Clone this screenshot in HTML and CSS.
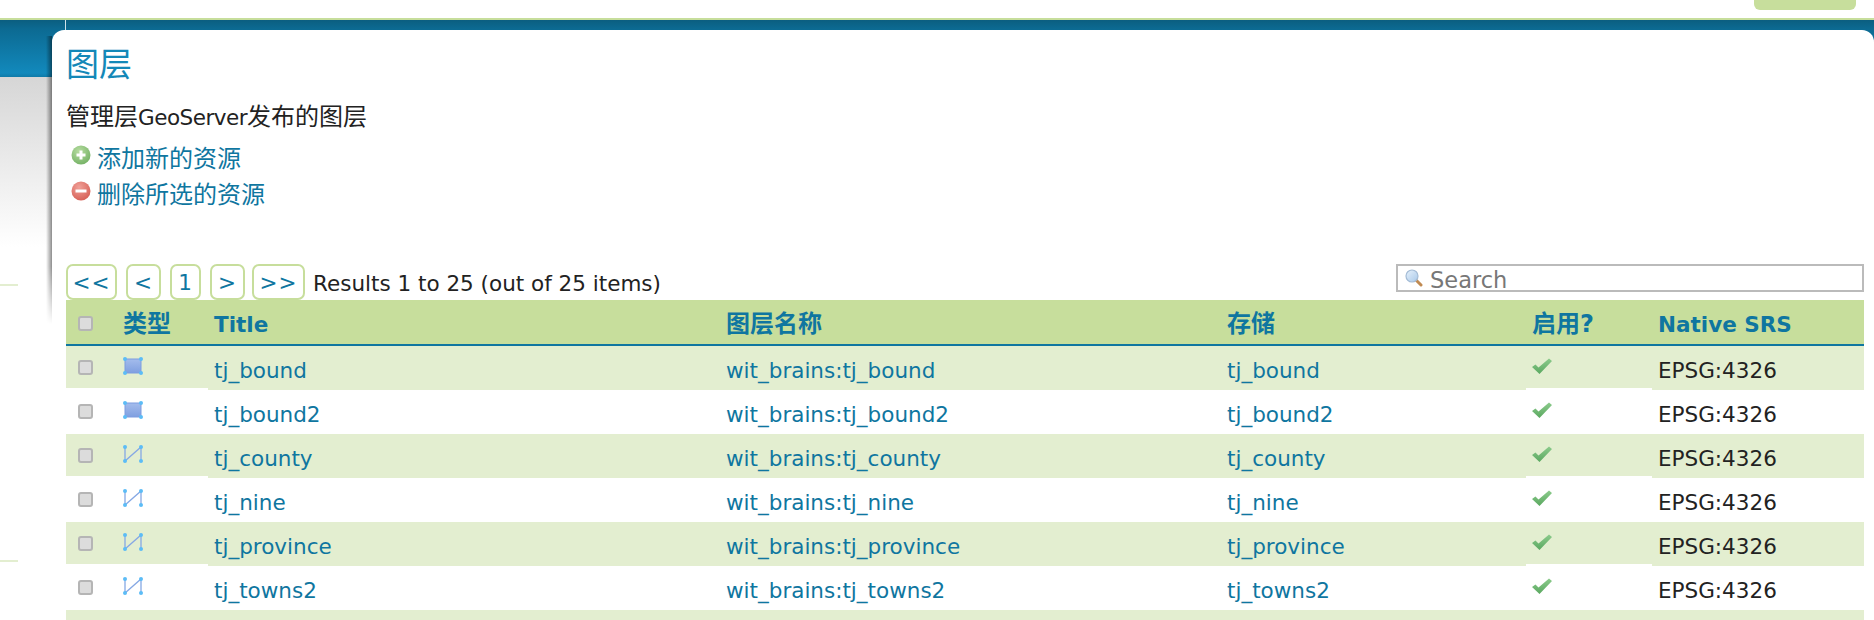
FILE: index.html
```html
<!DOCTYPE html>
<html lang="zh">
<head>
<meta charset="utf-8">
<title>图层</title>
<link rel="stylesheet" href="styles.css">
</head>
<body>
<div class="topbar"><div class="login-tab"></div></div>
<div class="header"></div>
<div class="sidefade"></div>
<div class="tick tick-a"></div>
<div class="tick tick-b"></div>
<main class="page">
  <h1 class="title">图层</h1>
  <p class="desc"><span class="cjk">管理层</span>GeoServer<span class="cjk">发布的图层</span></p>
  <ul class="actions">
    <li><svg class="ico" viewBox="0 0 20 20"><defs><radialGradient id="gp" cx=".4" cy=".3" r=".8"><stop offset="0" stop-color="#b6dca0"/><stop offset="1" stop-color="#6fae60"/></radialGradient></defs><circle cx="10" cy="10" r="9.500" fill="url(#gp)"/><path d="M10 5.500v9M5.500 10h9" stroke="#fff" stroke-width="3"/></svg><a class="cjk" href="#">添加新的资源</a></li>
    <li><svg class="ico" viewBox="0 0 20 20"><defs><radialGradient id="gm" cx=".4" cy=".3" r=".8"><stop offset="0" stop-color="#f0a098"/><stop offset="1" stop-color="#d45a50"/></radialGradient></defs><circle cx="10" cy="10" r="9.500" fill="url(#gm)"/><path d="M4.500 10h11" stroke="#fff" stroke-width="3"/></svg><a class="cjk" href="#">删除所选的资源</a></li>
  </ul>
  <div class="toolbar">
    <nav class="pager">
      <a class="pg pg-first" href="#">&lt;&lt;</a>
      <a class="pg" href="#">&lt;</a>
      <a class="pg pg-num" href="#">1</a>
      <a class="pg" href="#">&gt;</a>
      <a class="pg pg-last" href="#">&gt;&gt;</a>
      <span class="results">Results 1 to 25 (out of 25 items)</span>
    </nav>
    <div class="search">
      <svg class="mag" viewBox="0 0 18 18"><defs><linearGradient id="gl" x1="0" y1="0" x2="1" y2="1"><stop offset="0" stop-color="#e6f1fb"/><stop offset="1" stop-color="#a9c9ea"/></linearGradient></defs><path d="M10.500 10.500l5.500 5.500" stroke="#c08a52" stroke-width="3" stroke-linecap="round"/><circle cx="7" cy="7" r="6" fill="url(#gl)" stroke="#a4bcd6" stroke-width="1.200"/></svg>
      <span class="search-text">Search</span>
    </div>
  </div>
  <div class="table">
    <div class="row head">
      <span class="c c-check"><i class="box"></i></span><span class="c c-type"><span class="cjk">类型</span></span><span class="c c-title">Title</span><span class="c c-name"><span class="cjk">图层名称</span></span><span class="c c-store"><span class="cjk">存储</span></span><span class="c c-on"><span class="cjk">启用?</span></span><span class="c c-srs">Native SRS</span>
    </div>
    <div class="row odd">
      <span class="c c-check"><i class="box"></i></span><span class="c c-type"><svg class="geo" viewBox="0 0 20 18"><use href="#poly"/></svg></span><span class="c c-title"><a href="#">tj_bound</a></span><span class="c c-name"><a href="#">wit_brains:tj_bound</a></span><span class="c c-store"><a href="#">tj_bound</a></span><span class="c c-on"><svg class="chk" viewBox="0 0 20 16"><use href="#check"/></svg></span><span class="c c-srs">EPSG:4326</span>
    </div>
    <div class="row">
      <span class="c c-check"><i class="box"></i></span><span class="c c-type"><svg class="geo" viewBox="0 0 20 18"><use href="#poly"/></svg></span><span class="c c-title"><a href="#">tj_bound2</a></span><span class="c c-name"><a href="#">wit_brains:tj_bound2</a></span><span class="c c-store"><a href="#">tj_bound2</a></span><span class="c c-on"><svg class="chk" viewBox="0 0 20 16"><use href="#check"/></svg></span><span class="c c-srs">EPSG:4326</span>
    </div>
    <div class="row odd">
      <span class="c c-check"><i class="box"></i></span><span class="c c-type"><svg class="geo" viewBox="0 0 20 18"><use href="#line"/></svg></span><span class="c c-title"><a href="#">tj_county</a></span><span class="c c-name"><a href="#">wit_brains:tj_county</a></span><span class="c c-store"><a href="#">tj_county</a></span><span class="c c-on"><svg class="chk" viewBox="0 0 20 16"><use href="#check"/></svg></span><span class="c c-srs">EPSG:4326</span>
    </div>
    <div class="row">
      <span class="c c-check"><i class="box"></i></span><span class="c c-type"><svg class="geo" viewBox="0 0 20 18"><use href="#line"/></svg></span><span class="c c-title"><a href="#">tj_nine</a></span><span class="c c-name"><a href="#">wit_brains:tj_nine</a></span><span class="c c-store"><a href="#">tj_nine</a></span><span class="c c-on"><svg class="chk" viewBox="0 0 20 16"><use href="#check"/></svg></span><span class="c c-srs">EPSG:4326</span>
    </div>
    <div class="row odd">
      <span class="c c-check"><i class="box"></i></span><span class="c c-type"><svg class="geo" viewBox="0 0 20 18"><use href="#line"/></svg></span><span class="c c-title"><a href="#">tj_province</a></span><span class="c c-name"><a href="#">wit_brains:tj_province</a></span><span class="c c-store"><a href="#">tj_province</a></span><span class="c c-on"><svg class="chk" viewBox="0 0 20 16"><use href="#check"/></svg></span><span class="c c-srs">EPSG:4326</span>
    </div>
    <div class="row">
      <span class="c c-check"><i class="box"></i></span><span class="c c-type"><svg class="geo" viewBox="0 0 20 18"><use href="#line"/></svg></span><span class="c c-title"><a href="#">tj_towns2</a></span><span class="c c-name"><a href="#">wit_brains:tj_towns2</a></span><span class="c c-store"><a href="#">tj_towns2</a></span><span class="c c-on"><svg class="chk" viewBox="0 0 20 16"><use href="#check"/></svg></span><span class="c c-srs">EPSG:4326</span>
    </div>
    <div class="row odd tail"></div>
  </div>
</main>
<svg class="defs" width="0" height="0">
  <defs>
    <linearGradient id="gpoly" x1="0" y1="0" x2="0" y2="1"><stop offset="0" stop-color="#a4bcec"/><stop offset="1" stop-color="#7f9fe0"/></linearGradient>
    <g id="dots"><circle cx="2" cy="2" r="2"/><circle cx="18" cy="2" r="2"/><circle cx="2" cy="16" r="2"/><circle cx="18" cy="16" r="2"/></g>
    <g id="poly"><rect x="2" y="2" width="16" height="14" fill="url(#gpoly)" stroke="#7c9ce0" stroke-width="1"/><use href="#dots" fill="#5cbcf6"/></g>
    <g id="line"><path d="M2 2V16L18 2V16" fill="none" stroke="#86a8e4" stroke-width="1.300"/><use href="#dots" fill="#5cbcf6"/></g>
    <linearGradient id="gchk" x1="0" y1="0" x2="0" y2="1"><stop offset="0" stop-color="#8ccb8c"/><stop offset="1" stop-color="#5aa860"/></linearGradient>
    <path id="check" d="M0 9l3.500-2.500 3 3L17 0.500 20 3 7.500 16z" fill="url(#gchk)"/>
  </defs>
</svg>
</body>
</html>
```
FILE: styles.css
```css
* { box-sizing: border-box; }
html, body { margin: 0; padding: 0; height: 620px; overflow: hidden; background: #fff; }
body { position: relative; font-family: "DejaVu Sans", "Noto Sans CJK SC", sans-serif; font-size: 21.5px; color: #222; }
a { color: #0f76a0; text-decoration: none; }
.cjk { font-size: 24px; letter-spacing: 0; }

.topbar { height: 20px; border-bottom: 2px solid #c7de9c; position: relative; }
.login-tab { position: absolute; left: 1754px; top: 0; width: 102px; height: 10px; background: #c7de9c; border-radius: 0 0 6px 6px; }
.header { position: absolute; left: 0; right: 0; top: 20px; height: 57px; background: linear-gradient(#0b5e80 0, #0c6a92 9px, #1289bc 53px, #0f7aa8 57px); }
.header::after { content: ""; position: absolute; left: 65px; top: 0; width: 1px; height: 10px; background: #cfe2ea; }
.sidefade { position: absolute; left: 0; width: 52px; top: 77px; height: 170px; background: linear-gradient(#d6d6d6, #fff); }
.tick { position: absolute; left: 0; width: 18px; height: 2px; background: #e3eed0; }
.tick-a { top: 284px; }
.tick-b { top: 560px; }

.page { position: absolute; left: 52px; top: 30px; right: 0; height: 590px; background: #fff; border-radius: 12px 12px 0 0; padding: 0 10px 0 14px; }
.page::before { content: ""; position: absolute; left: -6px; top: 6px; width: 6px; height: 288px; background: linear-gradient(to right, rgba(0,0,0,0), rgba(0,0,0,.45)); -webkit-mask-image: linear-gradient(#000 80%, transparent); mask-image: linear-gradient(#000 80%, transparent); }
.title { margin: 15px 0 0; font-size: 33px; line-height: 40px; font-weight: 400; color: #1488b8; }
.desc { margin: 18px 0 0; line-height: 28px; height: 28px; letter-spacing: -.5px; }
.actions { list-style: none; margin: 7px 0 0; padding: 0 0 0 5px; }
.actions li { display: flex; align-items: center; height: 36px; }
.ico { width: 20px; height: 20px; margin-right: 6px; margin-bottom: 3px; flex: none; }

.toolbar { display: flex; justify-content: space-between; align-items: flex-start; margin-top: 54px; height: 36px; }
.pager { display: flex; align-items: center; height: 36px; }
.pg { display: flex; justify-content: center; align-items: center; height: 36px; width: 35px; padding-top: 2px; border: 2px solid #c7de9c; border-radius: 7px; margin-right: 9px; letter-spacing: 1px; line-height: 1; }
.pg-first { width: 51px; }
.pg-num { width: 31px; }
.pg-last { width: 53px; margin-left: -2px; }
.results { margin-left: -1px; padding-top: 2px; }
.search { display: flex; align-items: center; width: 468px; height: 28px; border: 2px solid #bbb; padding-left: 7px; color: #777; font-size: 22.5px; }
.search-text { padding-top: 3px; }
.mag { width: 18px; height: 18px; margin-right: 7px; flex: none; }

.row { display: flex; height: 44px; }
.head { background: #c7de9c; height: 46px; border-bottom: 2px solid #0f76a0; font-weight: 700; color: #0f76a0; }
.odd .c { background: #e3eed0; }
.tail { background: #e3eed0; height: 10px; }
.c { display: flex; align-items: center; flex: none; height: 44px; padding-left: 6px; padding-top: 5px; }
.c-check { width: 57px; padding-left: 12px; height: 42px; padding-top: 0; }
.c-type { width: 85px; padding-left: 0; height: 42px; padding-top: 0; }
.c-title { width: 512px; }
.c-name { width: 501px; }
.c-store { width: 305px; }
.c-on { width: 126px; height: 42px; padding-top: 0; }
.c-srs { flex: 1; }
.head .c { height: 44px; }
.head .c-check { padding-top: 3px; }
.head .c-type, .head .c-name, .head .c-store, .head .c-on { padding-top: 0; padding-bottom: 2px; }
.box { display: block; width: 15px; height: 15px; border: 2px solid #b5b5b5; border-radius: 3px; background: #dcdcdc; }
.geo { width: 20px; height: 18px; overflow: visible; margin-bottom: 2px; }
.chk { width: 20px; height: 16px; margin-bottom: 2px; }
.defs { position: absolute; }
```
